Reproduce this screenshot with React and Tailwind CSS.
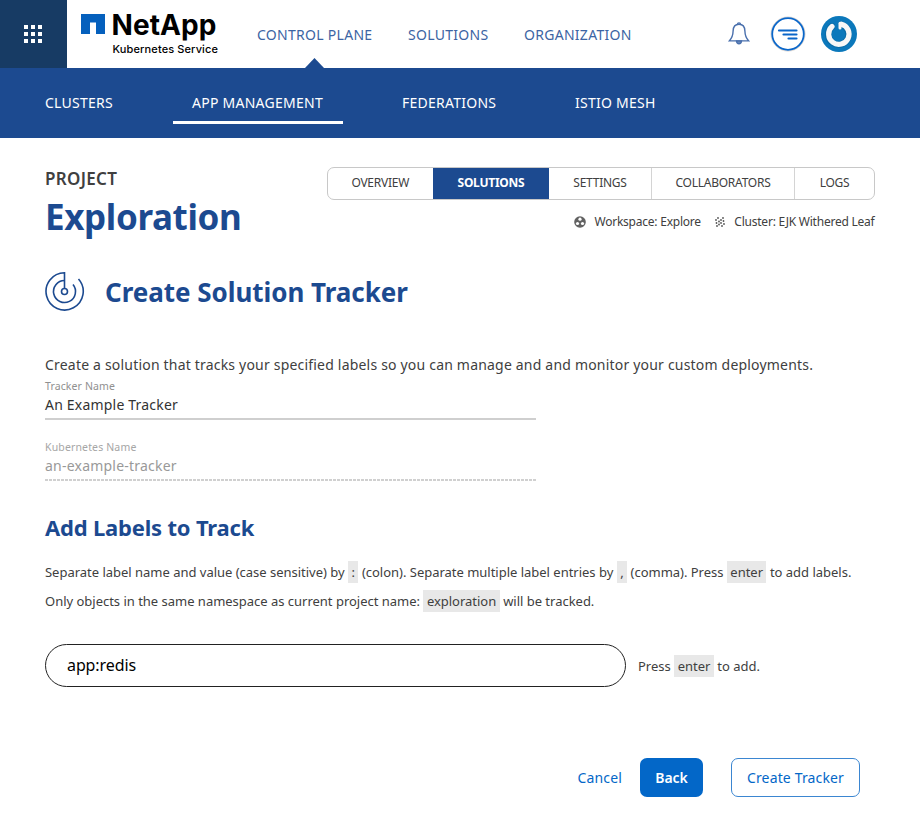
import React from "react";

function Key({ children }) {
  return <span className="mx-[3.5px] inline-block h-[22px] bg-[#e8e8e8] px-[3.4px] leading-[22px]">{children}</span>;
}

function AppGrid() {
  return (
    <div className="grid h-[67.5px] w-[66.5px] shrink-0 place-content-center grid-cols-[repeat(3,4px)] gap-[3.2px] bg-[#173b64]">
      {Array.from({ length: 9 }, (_, i) => (
        <span key={i} className="h-[4px] w-[4px] bg-white" />
      ))}
    </div>
  );
}

function Logo() {
  return (
    <div className="ml-[14px] flex w-[138px] shrink-0 flex-col pt-[10px]">
      <div className="flex h-[32px]">
        <svg className="mt-[4px] h-[20px] w-[24px] shrink-0" viewBox="0 0 24 20">
          <path d="M0 0H24V20H15V8.5H9V20H0Z" fill="#0560bd" />
        </svg>
        <span className="ml-[7px] font-['Inter'] text-[28px] font-bold leading-[30px] tracking-[0.1px] text-black">NetApp</span>
      </div>
      <span className="ml-[32px] whitespace-nowrap font-['Inter'] text-[11px] font-medium leading-[14px] tracking-[0.12px] text-black">Kubernetes Service</span>
    </div>
  );
}

function Header() {
  return (
    <header className="flex h-[67.5px] items-start bg-white">
      <AppGrid />
      <Logo />
      <nav className="ml-[38.500px] flex h-[67.5px] items-center whitespace-nowrap text-[14px] tracking-[0.28px] text-[#3c64a3]">
        <div className="relative flex h-full w-[151px] items-center pt-[2px]">
          CONTROL PLANE
          <svg className="absolute bottom-0 left-[48px] h-[10px] w-[19px]" viewBox="0 0 19 10">
            <path d="M0 10L9.5 0L19 10Z" fill="#1c4a90" />
          </svg>
        </div>
        <span className="w-[116px] pt-[2px]">SOLUTIONS</span>
        <span className="w-[108px] pt-[2px]">ORGANIZATION</span>
      </nav>
      <div className="ml-[95.500px] flex h-[68px] items-center">
        <svg className="h-[24px] w-[22px]" viewBox="0 0 22 24" fill="none" stroke="#4a70ad" strokeWidth="1.4">
          <path d="M11 2.3C6.8 2.3 5.2 5.5 5.1 9C5 13.500 4.100 16 1.300 18.900H20.700C17.900 16 17 13.500 16.900 9C16.800 5.500 15.200 2.300 11 2.300Z" />
          <path d="M9.500 2.200C9.500 .4 12.500 .4 12.500 2.200" />
          <path d="M8.500 19C8.800 22.600 13.200 22.600 13.500 19Z" fill="#6f8dbd" />
        </svg>
        <svg className="ml-[20px] h-[36px] w-[36px]" viewBox="0 0 36 36">
          <circle cx="18" cy="18" r="17" fill="none" stroke="#d8d4d0" strokeWidth="1" />
          <circle cx="18" cy="18" r="15.800" fill="#fff" stroke="#0a66c9" strokeWidth="1.800" />
          <path d="M9 14.500H26.500M13.500 18.500H26.500M18.500 22.500H26.500" stroke="#0a66c9" strokeWidth="2.200" strokeLinecap="round" />
        </svg>
        <svg className="ml-[14px] h-[38px] w-[38px]" viewBox="0 0 38 38">
          <circle cx="19" cy="19" r="18" fill="#0b78bb" />
          <path d="M12 11.500A10.200 10.200 0 1 0 21.500 9.700" fill="none" stroke="#07598c" strokeWidth="6.800" strokeLinecap="round" opacity=".4" />
          <path d="M12 11.500A10.200 10.200 0 1 0 21.500 9.200" fill="none" stroke="#f7f7f7" strokeWidth="5.200" strokeLinecap="round" />
          <path d="M16.700 8.500L18 19" stroke="#0b78bb" strokeWidth="3.800" strokeLinecap="round" />
          <path d="M18.500 14V19" stroke="#0b78bb" strokeWidth="6" strokeLinecap="round" />
          <path d="M20 8.300V13" stroke="#f7f7f7" strokeWidth="3" strokeLinecap="round" />
        </svg>
      </div>
    </header>
  );
}

function SubNav() {
  return (
    <nav className="flex h-[70px] whitespace-nowrap bg-[#1c4a90] pl-[45px] text-[14px] leading-[20px] tracking-[0.25px] text-white">
      <span className="w-[127.500px] pt-[25.500px]">CLUSTERS</span>
      <span className="mb-[13.500px] w-[170px] border-b-[3px] border-white pt-[25.500px] text-center">APP MANAGEMENT</span>
      <span className="ml-[59.500px] w-[173px] pt-[25.500px]">FEDERATIONS</span>
      <span className="pt-[25.500px]">ISTIO MESH</span>
    </nav>
  );
}

function ProjectHeader() {
  return (
    <section className="flex h-[134.500px] justify-between pt-[29px]">
      <div className="text-[#1c4a90]">
        <div className="text-[17px] font-semibold leading-[24px] tracking-[0.3px] text-[#404040]">PROJECT</div>
        <h1 className="mt-[2.500px] text-[35px] font-bold leading-[48px] tracking-[-0.37px]">Exploration</h1>
      </div>
      <div className="w-[548.500px]">
        <div className="flex h-[33px] overflow-hidden rounded-[7px] border border-[#c8c8c8] text-center text-[12px] leading-[30px] tracking-[-0.25px] text-[#404040]">
          <span className="w-[105.500px]">OVERVIEW</span>
          <span className="w-[116px] bg-[#1c4a90] font-bold text-white">SOLUTIONS</span>
          <span className="w-[103px] border-r border-[#d4d4d4]">SETTINGS</span>
          <span className="w-[143px] border-r border-[#d4d4d4]">COLLABORATORS</span>
          <span className="flex-1">LOGS</span>
        </div>
        <div className="mt-[13px] flex items-center justify-end whitespace-nowrap pr-[0.500px] text-[12px] leading-[18px] tracking-[-0.23px] text-[#404040]">
          <svg className="mr-[8px] h-[12px] w-[12px]" viewBox="0 0 12 12">
            <circle cx="6" cy="6" r="5.800" fill="#626262" />
            <g fill="#fff"><circle cx="6" cy="3.200" r="1.600" /><circle cx="3.500" cy="7.500" r="1.600" /><circle cx="8.500" cy="7.500" r="1.600" /></g>
          </svg>
          <span>Workspace: Explore</span>
          <svg className="ml-[14px] mr-[9.500px] h-[10px] w-[10px]" viewBox="0 0 10 10" fill="#555">
            <circle cx="3" cy="1" r=".9" /><circle cx="8" cy="1" r=".9" /><circle cx="1" cy="3" r=".9" /><circle cx="6" cy="3" r=".9" /><circle cx="4" cy="4.500" r=".9" /><circle cx="8.500" cy="4" r=".9" /><circle cx="6" cy="6" r=".9" /><circle cx="1.500" cy="6" r=".9" /><circle cx="4" cy="7.500" r=".9" /><circle cx="9" cy="7" r=".9" /><circle cx="2" cy="9" r=".9" /><circle cx="7" cy="9" r=".9" />
          </svg>
          <span>Cluster: EJK Withered Leaf</span>
        </div>
      </div>
    </section>
  );
}

function TrackerTitle() {
  return (
    <div className="flex h-[40px] items-center">
      <svg className="h-[40px] w-[40px]" viewBox="0 0 40 40" fill="none" stroke="#1c4a90" strokeWidth="1.600">
        <path d="M19.500 16.500V.8A18.600 18.600 0 1 0 33.500 7" />
        <path d="M19.500 8.500A11 11 0 1 0 28 12.500" />
        <circle cx="19.500" cy="19.500" r="3" />
      </svg>
      <h2 className="ml-[20px] text-[26px] font-bold leading-[36px] tracking-[-0.04px] text-[#1c4a90]">Create Solution Tracker</h2>
    </div>
  );
}

export default function App() {
  return (
    <div className="h-[815px] w-[920px] overflow-hidden bg-white font-['Noto_Sans',sans-serif]">
      <Header />
      <SubNav />
      <main className="pl-[45px] pr-[45px] text-[#404040]">
        <ProjectHeader />
        <TrackerTitle />
        <p className="mt-[42px] whitespace-nowrap text-[14px] leading-[22px] tracking-[0.195px]">Create a solution that tracks your specified labels so you can manage and and monitor your custom deployments.</p>
        <div className="mt-[3px] h-[41px] w-[491px] border-b-2 border-[#cfcfcf]">
          <div className="text-[10.500px] leading-[14px] tracking-[0.12px] text-[#909090]">Tracker Name</div>
          <div className="mt-[2px] text-[14px] leading-[20px] tracking-[0.2px] text-[#333]">An Example Tracker</div>
        </div>
        <div className="mt-[17px] w-[491px]">
          <div className="pt-[3px] text-[10.500px] leading-[14px] tracking-[0.15px] text-[#a6a6a6]">Kubernetes Name</div>
          <div className="mt-[2px] text-[14px] leading-[20px] tracking-[0.22px] text-[#999]">an-example-tracker</div>
          <div className="mt-[3px] h-[1.500px] bg-[repeating-linear-gradient(90deg,#d0d0d0_0_3px,transparent_3px_4px)]" />
        </div>
        <h3 className="mt-[30.500px] text-[22px] font-bold leading-[32px] tracking-[-0.19px] text-[#1c4a90]">Add Labels to Track</h3>
        <p className="mt-[15px] whitespace-nowrap text-[13px] leading-[29px] tracking-[-0.015px]">
          Separate label name and value (case sensitive) by<Key>:</Key>(colon). Separate multiple label entries by<Key>,</Key>(comma). Press<Key>enter</Key>to add labels.<br />
          Only objects in the same namespace as current project name:<Key>exploration</Key>will be tracked.
        </p>
        <div className="mt-[27.500px] flex items-center whitespace-nowrap text-[13px]">
          <div className="h-[43px] w-[581px] rounded-full border border-[#222] pl-[21px] text-[16px] leading-[40px] tracking-[-0.1px] text-black">app:redis</div>
          <span className="ml-[12px] pt-[2px]">Press<Key>enter</Key>to add.</span>
        </div>
        <div className="mt-[71.500px] flex h-[39px] items-center justify-end whitespace-nowrap pr-[15px] text-[14px] tracking-[0.15px] text-[#0367c8]">
          <span>Cancel</span>
          <span className="ml-[18px] h-[39px] w-[63px] rounded-[7px] bg-[#0367c8] text-center font-semibold leading-[39px] tracking-[-0.1px] text-white">Back</span>
          <span className="ml-[28px] h-[39px] w-[129px] rounded-[7px] border border-[#3b86d1] text-center leading-[37px]">Create Tracker</span>
        </div>
      </main>
    </div>
  );
}
